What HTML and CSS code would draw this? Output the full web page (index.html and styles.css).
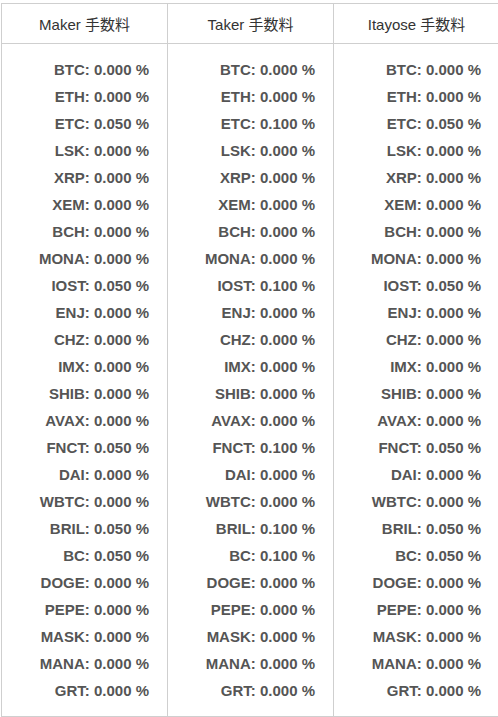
FILE: index.html
```html
<!DOCTYPE html>
<html lang="ja">
<head>
<meta charset="utf-8">
<link rel="stylesheet" href="styles.css">
</head>
<body>
<table class="fees">
  <thead>
    <tr><th>Maker 手数料</th><th>Taker 手数料</th><th>Itayose 手数料</th></tr>
  </thead>
  <tbody>
    <tr>
      <td>
        <div>BTC: 0.000 %</div><div>ETH: 0.000 %</div><div>ETC: 0.050 %</div><div>LSK: 0.000 %</div><div>XRP: 0.000 %</div><div>XEM: 0.000 %</div><div>BCH: 0.000 %</div><div>MONA: 0.000 %</div><div>IOST: 0.050 %</div><div>ENJ: 0.000 %</div><div>CHZ: 0.000 %</div><div>IMX: 0.000 %</div><div>SHIB: 0.000 %</div><div>AVAX: 0.000 %</div><div>FNCT: 0.050 %</div><div>DAI: 0.000 %</div><div>WBTC: 0.000 %</div><div>BRIL: 0.050 %</div><div>BC: 0.050 %</div><div>DOGE: 0.000 %</div><div>PEPE: 0.000 %</div><div>MASK: 0.000 %</div><div>MANA: 0.000 %</div><div>GRT: 0.000 %</div>
      </td>
      <td>
        <div>BTC: 0.000 %</div><div>ETH: 0.000 %</div><div>ETC: 0.100 %</div><div>LSK: 0.000 %</div><div>XRP: 0.000 %</div><div>XEM: 0.000 %</div><div>BCH: 0.000 %</div><div>MONA: 0.000 %</div><div>IOST: 0.100 %</div><div>ENJ: 0.000 %</div><div>CHZ: 0.000 %</div><div>IMX: 0.000 %</div><div>SHIB: 0.000 %</div><div>AVAX: 0.000 %</div><div>FNCT: 0.100 %</div><div>DAI: 0.000 %</div><div>WBTC: 0.000 %</div><div>BRIL: 0.100 %</div><div>BC: 0.100 %</div><div>DOGE: 0.000 %</div><div>PEPE: 0.000 %</div><div>MASK: 0.000 %</div><div>MANA: 0.000 %</div><div>GRT: 0.000 %</div>
      </td>
      <td>
        <div>BTC: 0.000 %</div><div>ETH: 0.000 %</div><div>ETC: 0.050 %</div><div>LSK: 0.000 %</div><div>XRP: 0.000 %</div><div>XEM: 0.000 %</div><div>BCH: 0.000 %</div><div>MONA: 0.000 %</div><div>IOST: 0.050 %</div><div>ENJ: 0.000 %</div><div>CHZ: 0.000 %</div><div>IMX: 0.000 %</div><div>SHIB: 0.000 %</div><div>AVAX: 0.000 %</div><div>FNCT: 0.050 %</div><div>DAI: 0.000 %</div><div>WBTC: 0.000 %</div><div>BRIL: 0.050 %</div><div>BC: 0.050 %</div><div>DOGE: 0.000 %</div><div>PEPE: 0.000 %</div><div>MASK: 0.000 %</div><div>MANA: 0.000 %</div><div>GRT: 0.000 %</div>
      </td>
    </tr>
  </tbody>
</table>
</body>
</html>
```
FILE: styles.css
```css
html, body {
  margin: 0;
  padding: 0;
  background: #fff;
  overflow: hidden;
}
body {
  padding: 3px 0 0 1px;
  font-family: "Liberation Sans", Arial, "Noto Sans CJK JP", sans-serif;
}
.fees {
  border-collapse: collapse;
  width: 499px;
  table-layout: fixed;
}
.fees th, .fees td {
  border: 1px solid #cfcfcf;
}
.fees th {
  height: 39px;
  padding: 0;
  font-weight: normal;
  font-size: 15px;
  color: #333;
  text-align: center;
  vertical-align: middle;
}
.fees td {
  padding: 12px 18px 12px 8px;
  text-align: right;
  vertical-align: top;
  font-weight: bold;
  font-size: 15px;
  line-height: 27px;
  color: #555;
}
```
